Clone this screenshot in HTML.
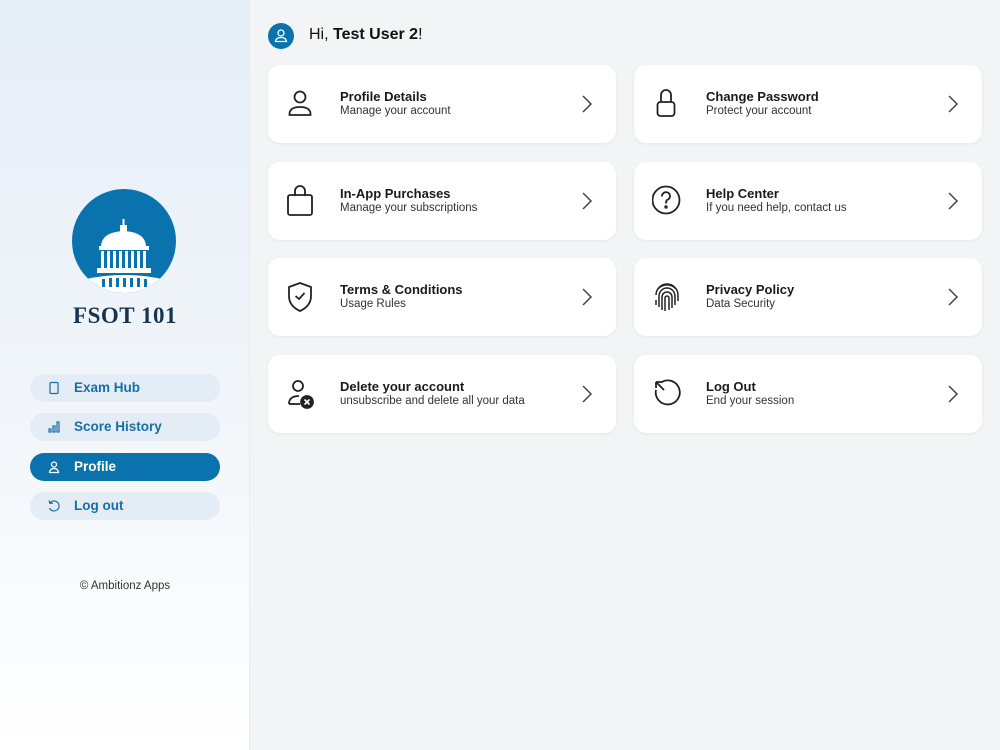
<!DOCTYPE html>
<html><head><meta charset="utf-8"><style>
*{margin:0;padding:0;box-sizing:border-box}
body{width:1000px;height:750px;overflow:hidden;font-family:"Liberation Sans",sans-serif;background:#f3f4f6;position:relative}
.side{position:absolute;left:0;top:0;width:250px;height:750px;background:linear-gradient(180deg,#e5edf6 0%,#f2f6fa 55%,#ffffff 100%);border-right:1px solid #e8ebef}
.logo{position:absolute;left:72px;top:189px;width:104px;height:104px;border-radius:50%;background:#0a73ae;overflow:hidden}
.brand{position:absolute;left:0;width:250px;top:303px;text-align:center;font-family:"Liberation Serif",serif;font-weight:bold;font-size:23px;color:#16344f;letter-spacing:0.5px}
.nav{position:absolute;left:30px;width:190px;height:28px;border-radius:14px;background:#e4ecf5;color:#1570a8;font-size:13.5px;font-weight:bold;line-height:28px;padding-left:44px}
.nav svg{position:absolute;left:17px;top:7px}
.nav.act{background:#0a73ae;color:#fff}
.copy{position:absolute;left:0;width:250px;top:580px;text-align:center;font-size:11.5px;color:#333}
.hi{position:absolute;left:268px;top:23px;width:26px;height:26px;border-radius:50%;background:#0a73ae}
.hit{position:absolute;left:309px;top:26px;font-size:16px;color:#111}
.card{position:absolute;width:348px;height:78px;background:#fff;border-radius:12px;box-shadow:0 1px 3px rgba(0,0,0,.06)}
.card svg.ic{position:absolute;left:18px;top:23px}
.card .t{position:absolute;left:72px;top:24px;font-size:13px;font-weight:bold;color:#1a1a1a}
.card .s{position:absolute;left:72px;top:40px;font-size:11.5px;color:#333}
.card .ch{position:absolute;left:313px;top:29px}
</style></head><body>
<div class="side">
<div class="logo"><svg width="104" height="104" viewBox="0 0 104 104">
<g fill="#fff"><rect x="50.5" y="30" width="2" height="6"/><rect x="48" y="36" width="7" height="7"/><path d="M29 57 Q30 43 51.5 42 Q73 43 74 57Z"/><rect x="27" y="57" width="50" height="4"/><rect x="25" y="79" width="54" height="5"/><path d="M14 90 Q52 82 90 90 L92 104 L12 104Z"/></g>
<g fill="#fff"><rect x="29" y="62" width="3" height="17"/><rect x="35" y="62" width="3" height="17"/><rect x="41" y="62" width="3" height="17"/><rect x="47" y="62" width="3" height="17"/><rect x="53" y="62" width="3" height="17"/><rect x="59" y="62" width="3" height="17"/><rect x="65" y="62" width="3" height="17"/><rect x="71" y="62" width="3" height="17"/></g>
<g fill="#0a73ae"><rect x="30" y="90" width="3" height="8"/><rect x="37" y="89" width="3" height="9"/><rect x="44" y="89" width="3" height="9"/><rect x="51" y="89" width="3" height="9"/><rect x="58" y="89" width="3" height="9"/><rect x="65" y="89" width="3" height="9"/><rect x="72" y="90" width="3" height="8"/></g>
</svg></div>
<div class="brand">FSOT 101</div>
<div class="nav" style="top:374px"><svg width="14" height="14" viewBox="0 0 14 14" fill="none" stroke="#1570a8" stroke-width="1.2"><rect x="3" y="1.5" width="8" height="11" rx="1"/></svg>Exam Hub</div>
<div class="nav" style="top:413px"><svg width="14" height="14" viewBox="0 0 14 14" fill="none" stroke="#1570a8" stroke-width="1.2"><rect x="2" y="9" width="2" height="3"/><rect x="6" y="6" width="2" height="6"/><rect x="10" y="2" width="2" height="10"/></svg>Score History</div>
<div class="nav act" style="top:453px"><svg width="14" height="14" viewBox="0 0 14 14" fill="none" stroke="#fff" stroke-width="1.2"><circle cx="7" cy="4.5" r="2.5"/><path d="M2.5 12.5 Q3 8.5 7 8.5 Q11 8.5 11.5 12.5Z"/></svg>Profile</div>
<div class="nav" style="top:492px"><svg width="14" height="14" viewBox="0 0 14 14" fill="none" stroke="#1570a8" stroke-width="1.2"><path d="M3 4 A5 5 0 1 1 2.5 9"/><path d="M2 1.5 L3 4.5 L6 4"/></svg>Log out</div>
<div class="copy">© Ambitionz Apps</div>
</div>
<div class="hi"><svg width="26" height="26" viewBox="0 0 26 26" fill="none" stroke="#fff" stroke-width="1.3"><circle cx="13" cy="10" r="3"/><path d="M7.5 18.5 Q8 14.5 13 14.5 Q18 14.5 18.5 18.5Z"/></svg></div>
<div class="hit">Hi, <b>Test User 2</b>!</div>

<div class="card" style="left:268px;top:65px"><svg class="ic" width="28" height="30" viewBox="0 0 28 30" fill="none" stroke="#222" stroke-width="1.8"><circle cx="14" cy="9" r="5.5"/><path d="M3.5 27 Q3 19 14 19 Q25 19 24.5 27Z"/></svg><div class="t">Profile Details</div><div class="s">Manage your account</div><svg class="ch" width="12" height="20" viewBox="0 0 12 20" fill="none" stroke="#444" stroke-width="1.5"><path d="M2 2 L10 10 L2 18"/></svg></div>
<div class="card" style="left:634px;top:65px"><svg class="ic" width="28" height="30" viewBox="0 0 28 30" fill="none" stroke="#222" stroke-width="1.8"><path d="M9 14 V7 A5 5 0 0 1 19 7 V14"/><rect x="5.5" y="14" width="17" height="14" rx="3"/></svg><div class="t">Change Password</div><div class="s">Protect your account</div><svg class="ch" width="12" height="20" viewBox="0 0 12 20" fill="none" stroke="#444" stroke-width="1.5"><path d="M2 2 L10 10 L2 18"/></svg></div>

<div class="card" style="left:268px;top:162px"><svg class="ic" width="28" height="32" viewBox="0 0 28 32" fill="none" stroke="#222" stroke-width="1.8"><path d="M9 11 V6 A5 5 0 0 1 19 6 V11"/><rect x="2" y="10" width="24" height="20" rx="2"/></svg><div class="t">In-App Purchases</div><div class="s">Manage your subscriptions</div><svg class="ch" width="12" height="20" viewBox="0 0 12 20" fill="none" stroke="#444" stroke-width="1.5"><path d="M2 2 L10 10 L2 18"/></svg></div>
<div class="card" style="left:634px;top:162px"><svg class="ic" width="30" height="32" viewBox="0 0 30 32" fill="none" stroke="#222" stroke-width="1.8"><circle cx="14" cy="15" r="13.5"/><path d="M10 11.5 A4 4 0 1 1 15 15 Q14 16 14 18.5"/><circle cx="14" cy="22" r="0.8" fill="#222"/></svg><div class="t">Help Center</div><div class="s">If you need help, contact us</div><svg class="ch" width="12" height="20" viewBox="0 0 12 20" fill="none" stroke="#444" stroke-width="1.5"><path d="M2 2 L10 10 L2 18"/></svg></div>

<div class="card" style="left:268px;top:258px"><svg class="ic" width="28" height="32" viewBox="0 0 28 32" fill="none" stroke="#222" stroke-width="1.8"><path d="M14 2 L25 6 V15 Q25 25 14 30 Q3 25 3 15 V6Z"/><path d="M9.5 15 L13 18 L18.5 12"/></svg><div class="t">Terms &amp; Conditions</div><div class="s">Usage Rules</div><svg class="ch" width="12" height="20" viewBox="0 0 12 20" fill="none" stroke="#444" stroke-width="1.5"><path d="M2 2 L10 10 L2 18"/></svg></div>
<div class="card" style="left:634px;top:258px"><svg class="ic" width="30" height="32" viewBox="0 0 30 32" fill="none" stroke="#222" stroke-width="1.5"><path d="M6 8 A12 12 0 0 1 24 8"/><path d="M4 14 A11 11 0 0 1 26 14 V20"/><path d="M7 26 V15 A8 8 0 0 1 23 15 V24"/><path d="M10 29 V16 A5 5 0 0 1 20 16 V27"/><path d="M13 30 V17 A2 2 0 0 1 17 17 V29"/><path d="M4 19 V24"/></svg><div class="t">Privacy Policy</div><div class="s">Data Security</div><svg class="ch" width="12" height="20" viewBox="0 0 12 20" fill="none" stroke="#444" stroke-width="1.5"><path d="M2 2 L10 10 L2 18"/></svg></div>

<div class="card" style="left:268px;top:355px"><svg class="ic" width="30" height="32" viewBox="0 0 30 32" fill="none" stroke="#222" stroke-width="1.8"><circle cx="12" cy="8" r="5"/><path d="M3 26 Q3 18 13 18"/><path d="M3 26 H14"/><circle cx="21" cy="24" r="6" fill="#222"/><path d="M18.5 21.5 L23.5 26.5 M23.5 21.5 L18.5 26.5" stroke="#fff" stroke-width="1.6"/></svg><div class="t">Delete your account</div><div class="s">unsubscribe and delete all your data</div><svg class="ch" width="12" height="20" viewBox="0 0 12 20" fill="none" stroke="#444" stroke-width="1.5"><path d="M2 2 L10 10 L2 18"/></svg></div>
<div class="card" style="left:634px;top:355px"><svg class="ic" width="30" height="32" viewBox="0 0 30 32" fill="none" stroke="#222" stroke-width="1.8"><path d="M9 4.5 A12 12 0 1 1 4 12"/><path d="M4 4 L12 12 M4 4 V10 M4 4 H10"/></svg><div class="t">Log Out</div><div class="s">End your session</div><svg class="ch" width="12" height="20" viewBox="0 0 12 20" fill="none" stroke="#444" stroke-width="1.5"><path d="M2 2 L10 10 L2 18"/></svg></div>
</body></html>
